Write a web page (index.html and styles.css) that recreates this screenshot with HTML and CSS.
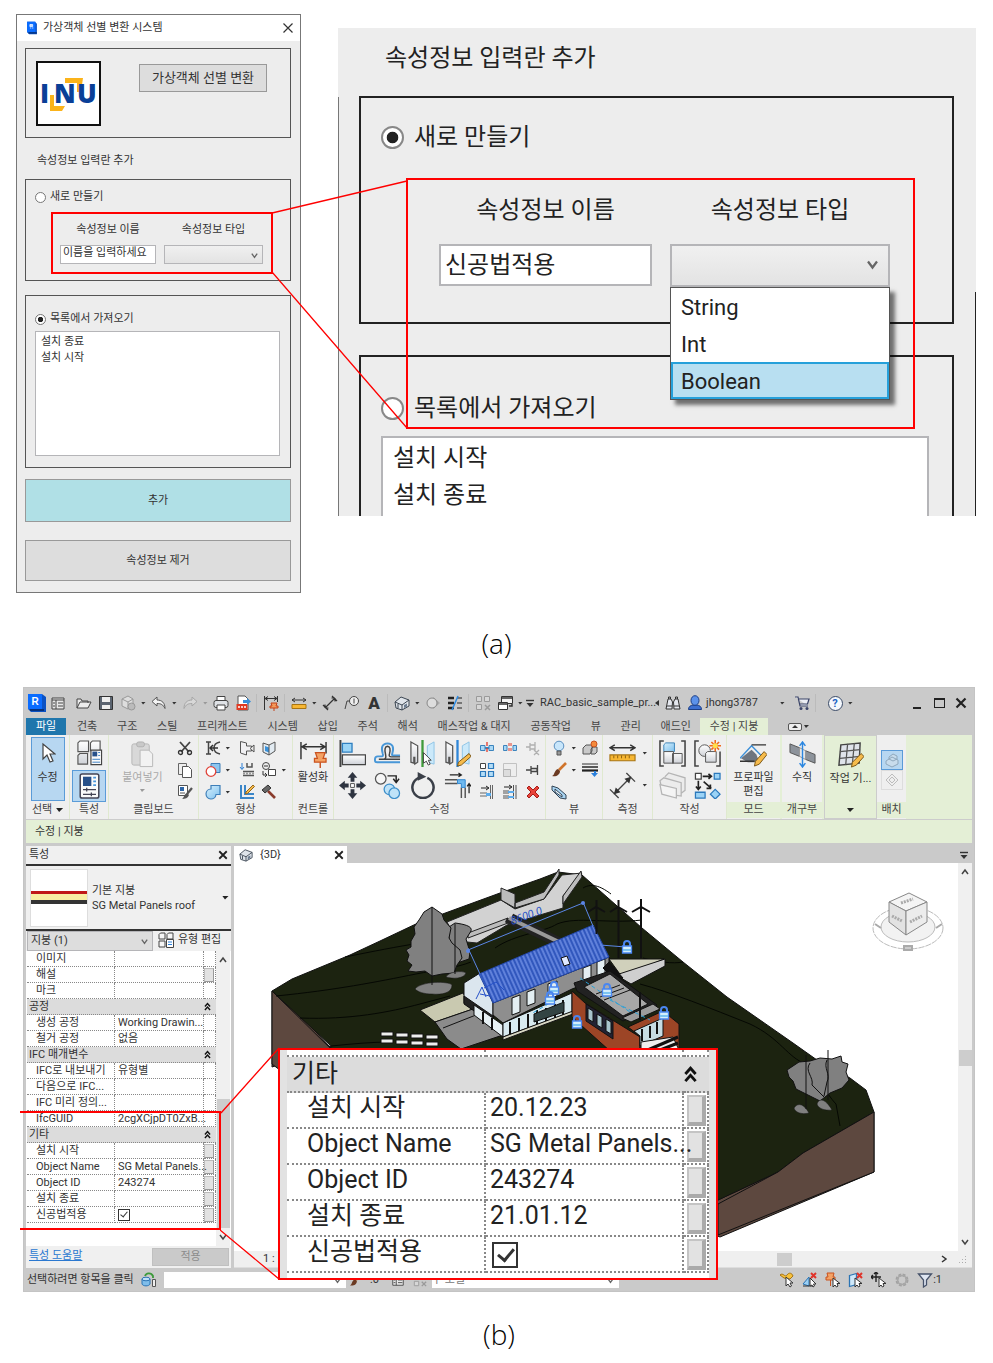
FILE: index.html
```html
<!DOCTYPE html>
<html lang="ko">
<head>
  <meta charset="UTF-8">
  <meta name="viewport" content="width=device-width, initial-scale=1.0">
  <title>가상객체 선별 변환 시스템</title>
  <link rel="stylesheet" href="styles.css">
</head>
<body>
  <!-- ICONS -->
  <svg class="sprite" aria-hidden="true">
    <defs>
      <linearGradient id="gBlue" x1="0" y1="0" x2="1" y2="1"><stop offset="0" stop-color="#d8f0fc"/><stop offset="1" stop-color="#7cc0ee"/></linearGradient>
      <linearGradient id="gGray" x1="0" y1="0" x2="0" y2="1"><stop offset="0" stop-color="#ffffff"/><stop offset="1" stop-color="#cfd2d8"/></linearGradient>
      <pattern id="seam" width="4" height="4" patternUnits="userSpaceOnUse" patternTransform="rotate(-24)"><rect width="4" height="4" fill="#3157bd"/><path d="M1 0v4" stroke="#7f9df0" stroke-width="1.2"/></pattern>
    </defs>
    <symbol id="close" viewBox="0 0 12 12"><path d="M1.500 1.500l9 9M10.500 1.500l-9 9" fill="none" stroke="currentColor" stroke-width="1.200"/></symbol>
    <symbol id="closeBold" viewBox="0 0 12 12"><path d="M1.500 1.500l9 9M10.500 1.500l-9 9" fill="none" stroke="#222" stroke-width="2.200"/></symbol>
    <symbol id="chev" viewBox="0 0 10 10"><path d="M2 3l3 4 3-4" fill="none" stroke="currentColor" stroke-width="1.500"/></symbol>
    <symbol id="dbl" viewBox="0 0 10 14"><path d="M1 7l4-4.500L9 7M1 12.500L5 8l4 4.500" fill="none" stroke="#111" stroke-width="2.200"/></symbol>
    <symbol id="home" viewBox="0 0 16 16"><path d="M2 3h12v11H2z" fill="#e8e8e8" stroke="#444"/><path d="M2 5h12M6 5v9M8 8h5M8 11h5M3 8h2M3 11h2" stroke="#444" fill="none"/></symbol>
    <symbol id="open" viewBox="0 0 16 16"><path d="M1 13V4h4l1 2h6v2M1 13l3-6h11l-3 6z" fill="#ececec" stroke="#444"/></symbol>
    <symbol id="save" viewBox="0 0 16 16"><path d="M1.500 1.500h13v13h-13z" fill="#5b6470" stroke="#333"/><path d="M4 2h8v5H4zM4 10h8v4H4z" fill="#eee"/></symbol>
    <symbol id="cubeGray" viewBox="0 0 16 16"><path d="M2 4l6-3 5 3v7l-5 3-6-3z" fill="#ddd" stroke="#999"/><path d="M2 4l6 3 5-3M8 7v7" stroke="#999" fill="none"/><circle cx="11.500" cy="11.500" r="3.500" fill="#bbb" stroke="#999"/></symbol>
    <symbol id="undo" viewBox="0 0 16 16"><path d="M6 2L1 6.500 6 11V8.500c4 0 6 1 8 5C14 8 11 5 6 5z" fill="#f4f4f4" stroke="#555"/></symbol>
    <symbol id="redo" viewBox="0 0 16 16"><path d="M10 2l5 4.500L10 11V8.500c-4 0-6 1-8 5C2 8 5 5 10 5z" fill="#d8d8d8" stroke="#a6a6a6"/></symbol>
    <symbol id="print" viewBox="0 0 16 16"><path d="M4 1.500h8V6H4z" fill="#fff" stroke="#444"/><rect x="1" y="5.500" width="14" height="7" rx="2" fill="#dfe2e6" stroke="#444"/><path d="M4 10h8v5H4z" fill="#fff" stroke="#444"/></symbol>
    <symbol id="pdf" viewBox="0 0 16 16"><path d="M3 1h7l3 3v11H3z" fill="#fff" stroke="#555"/><path d="M1.500 9h11v6h-11z" fill="#e03a22"/><path d="M3 12h8" stroke="#fff" stroke-width="1.500" stroke-dasharray="2 1"/><path d="M8 5h4V3l4 3.500-4 3.500V8H8z" fill="#3a8fd8"/></symbol>
    <symbol id="dimpin" viewBox="0 0 16 16"><path d="M1.500 1v14M14.500 1v6M2 3.500h12M5 1.500l-3 2 3 2M11 1.500l3 2-3 2" fill="none" stroke="#333"/><path d="M8 8h6l-1 3h2v2H7v-2h2zM11 13v3" fill="#f29a5c" stroke="#c4421a"/></symbol>
    <symbol id="measure" viewBox="0 0 16 16"><path d="M1 5h14M4 3L1 5l3 2M12 3l3 2-3 2" fill="none" stroke="#333"/><path d="M1 9.500h14v4H1z" fill="#f7b733" stroke="#a87412"/></symbol>
    <symbol id="dim" viewBox="0 0 16 16"><path d="M3 13L13 3M1 10l5 5M10 1l5 5M3 13v-3.500M3 13h3.500M13 3v3.500M13 3H9.500" fill="none" stroke="#333" stroke-width="1.200"/></symbol>
    <symbol id="tag" viewBox="0 0 16 16"><circle cx="10" cy="6" r="4.500" fill="#eee" stroke="#444"/><path d="M10 3.500v5M5.500 6H3l-2 8" fill="none" stroke="#444"/></symbol>
    <symbol id="house" viewBox="0 0 16 16"><path d="M1 7l6-5 8 3v6l-7 4-6-2z" fill="#dfe4ea" stroke="#3c4652"/><path d="M1 7l7 3 7-5M8 10v5M4 9v4" fill="none" stroke="#3c4652"/><path d="M10 10l3-1.500v3L10 13z" fill="#6c7c90"/></symbol>
    <symbol id="section" viewBox="0 0 16 16"><path d="M8 2l7 6-7 6z" fill="#aaa"/><circle cx="7" cy="8" r="5" fill="#ddd" stroke="#888"/></symbol>
    <symbol id="thin" viewBox="0 0 16 16"><path d="M1 3h6M1 8h6M1 13h6" stroke="#222" stroke-width="2.400"/><path d="M10 3h5M10 8h5M10 13h5" stroke="#222"/><path d="M11 1L5 15" stroke="#2b8ce6" stroke-width="1.500"/></symbol>
    <symbol id="closeViews" viewBox="0 0 16 16"><path d="M1.500 1.500h5v5h-5zM1.500 9.500h5v5h-5zM9.500 1.500h5v5h-5z" fill="#d6d6d6" stroke="#9a9a9a"/><path d="M10 10l5 5M15 10l-5 5" stroke="#9a9a9a" stroke-width="1.500"/></symbol>
    <symbol id="switch" viewBox="0 0 16 16"><path d="M4.500 1.500h11v7h-11z" fill="#f2f2f2" stroke="#333"/><path d="M1.500 7.500h9v7h-9z" fill="#fff" stroke="#333"/><path d="M5 3h10M2 9h8M12 11h3V9" stroke="#333" fill="none" stroke-width="1.500"/></symbol>
    <symbol id="more" viewBox="0 0 10 10"><path d="M1 2.500h8" stroke="#333" stroke-width="1.400"/><path d="M1.500 5h7L5 9z" fill="#333"/></symbol>
    <symbol id="binoc" viewBox="0 0 16 16"><path d="M1 14L3 4h3l1.500 3L7 14zM15 14L13 4h-3L8.500 7 9 14z" fill="#e4e7ee" stroke="#333"/><path d="M3.500 4V2h2v2M10.500 4V2h2v2M2 11h5M9 11h5" fill="none" stroke="#333"/></symbol>
    <symbol id="user" viewBox="0 0 16 16"><path d="M1.500 14.500c0-3 2-4 4.500-4.500h4c2.500.500 4.500 1.500 4.500 4.500z" fill="#3c6fd0" stroke="#1d3f86"/><ellipse cx="8" cy="5.500" rx="4" ry="4.800" fill="#5c92ea" stroke="#1d3f86"/></symbol>
    <symbol id="cart" viewBox="0 0 16 16"><path d="M1 2h3l2 9h8M4.500 4H15l-1.500 5H6" fill="#eceef4" stroke="#3b4468" stroke-width="1.200"/><circle cx="7" cy="13.500" r="1.500" fill="#3b4468"/><circle cx="13" cy="13.500" r="1.500" fill="#3b4468"/></symbol>
    <symbol id="arrow" viewBox="0 0 16 24"><path d="M3 2v15l4-4 3 7 3-1-3-7h5z" fill="#fff" stroke="#444" stroke-width="1.200"/></symbol>
    <symbol id="famProps" viewBox="0 0 28 28"><path d="M2 3l2-2h9v11H2zM15 3l2-2h8v10H15zM2 16l2-2h8v11H2z" fill="url(#gGray)" stroke="#555" stroke-width="1.200"/><path d="M15.500 10.500h11v15h-11z" fill="#fafafa" stroke="#444" stroke-width="1.200"/><path d="M17 12h5v5h-5z" fill="#27508a"/><path d="M23 13h2M23 16h2M17 20h8M17 23h8" stroke="#3b7fc4"/></symbol>
    <symbol id="props" viewBox="0 0 24 28"><rect x="2" y="1" width="20" height="26" rx="2" fill="#fafafa" stroke="#445" stroke-width="1.600"/><path d="M5 4h9v10H5z" fill="#27508a"/><path d="M16 5h3M16 9h3M16 13h3" stroke="#4a96dc" stroke-width="2"/><path d="M5 18h14M5 23h14M9 16v4M14 21v4" stroke="#445" stroke-width="1.400"/></symbol>
    <symbol id="paste" viewBox="0 0 28 28"><rect x="3" y="3" width="18" height="22" rx="2" fill="#d8d8d8" stroke="#b5b5b5"/><rect x="8" y="1" width="8" height="5" rx="2" fill="#c9c9c9" stroke="#b0b0b0"/><path d="M11.500 9.500h9l4 4v13h-13z" fill="#f2f2f2" stroke="#b8b8b8"/></symbol>
    <symbol id="cut" viewBox="0 0 16 16"><path d="M3 2l9 10M13 2L4 12" stroke="#444" stroke-width="1.800"/><circle cx="3.500" cy="12.500" r="2" fill="none" stroke="#333" stroke-width="1.300"/><circle cx="12.500" cy="12.500" r="2" fill="none" stroke="#333" stroke-width="1.300"/></symbol>
    <symbol id="copy" viewBox="0 0 16 16"><path d="M1.500 1.500h8v11h-8z" fill="#eee" stroke="#666"/><path d="M5.500 4.500h6l3 3v8h-9z" fill="#fff" stroke="#555"/></symbol>
    <symbol id="match" viewBox="0 0 16 16"><path d="M1.500 1.500h9v10h-9z" fill="#fff" stroke="#555"/><path d="M3 3h4v4H3z" fill="#2e66a8"/><path d="M3 9h5" stroke="#555"/><path d="M15 4l-5 6" stroke="#555" stroke-width="2.200"/><path d="M10 9l2 2c-1 3-4 4-7 4 2-1 2-5 5-6z" fill="#555"/></symbol>
    <symbol id="cope" viewBox="0 0 16 16"><path d="M1 2h5M1 14h5M3.500 2v12M15 2c-5 1-6 4-6 6s1 5 6 6" fill="none" stroke="#444" stroke-width="1.500"/><path d="M5 8h8M8 5L5 8l3 3" fill="none" stroke="#333" stroke-width="1.500"/></symbol>
    <symbol id="cutGeo" viewBox="0 0 16 16"><path d="M6 1.500h9v9H6z" fill="#8cc6f0" stroke="#3d7eb8"/><circle cx="6" cy="9.500" r="4.800" fill="#fff" stroke="#e0443a" stroke-width="1.300"/></symbol>
    <symbol id="joinGeo" viewBox="0 0 16 16"><path d="M6 1.500h9v9h-4A5 5 0 1 1 6 5z" fill="url(#gBlue)" stroke="#3d7eb8" stroke-width="1.200"/></symbol>
    <symbol id="door" viewBox="0 0 16 16"><path d="M1.500 1.500l6 1.500v3h5v5h-5v4l-6-2z" fill="#f0f0f2" stroke="#555"/><path d="M15 5l-4 3.500L15 12z" fill="#e8e8e8" stroke="#555"/></symbol>
    <symbol id="splitface" viewBox="0 0 16 16"><path d="M2 3l6 2 6-3v9l-6 4-6-3z" fill="#e2ebf2" stroke="#555"/><path d="M4 6l4 1.500v5L4 11z" fill="#3b93dc"/><path d="M8 5v10" stroke="#555"/></symbol>
    <symbol id="beam" viewBox="0 0 16 16"><path d="M3 1v6M1 5l2 2.500L5 5" fill="none" stroke="#2b7fd6"/><path d="M8 1v4h5V1M4 9.500h11M4 13.500h11" fill="none" stroke="#555" stroke-width="1.500"/><path d="M4 11.500h11" stroke="#999" stroke-width="2" stroke-dasharray="2 1"/></symbol>
    <symbol id="demo" viewBox="0 0 16 16"><circle cx="5" cy="4" r="3.500" fill="#eee" stroke="#444"/><path d="M7.500 7.500h7v6h-7z" fill="#fff" stroke="#444"/><path d="M2 9v4h3M4 11l2 2-2 2M3 4h4" fill="none" stroke="#333"/></symbol>
    <symbol id="wallj" viewBox="0 0 16 16"><path d="M2 1v13h13M6 1v9h9" fill="none" stroke="#3a86c8" stroke-width="2"/><path d="M14 1l1.500 1.500-7 7-2 .500.500-2z" fill="#f6bb4c" stroke="#94661a"/></symbol>
    <symbol id="hammer" viewBox="0 0 16 16"><path d="M7 7l7 7" stroke="#8a3b2c" stroke-width="2.600"/><path d="M1 6l6-5 3 3-6 5z" fill="#666" stroke="#333"/></symbol>
    <symbol id="activate" viewBox="0 0 28 28"><path d="M1 1v18M27 1v12M2 6h24M7 3L2 6l5 3M21 3l5 3-5 3" fill="none" stroke="#333" stroke-width="1.500"/><path d="M16 12h10l-2 6h3v4H15v-4h3z" fill="#f4a264" stroke="#c9521f" stroke-width="1.300"/><path d="M21 22v6" stroke="#c9521f" stroke-width="1.500"/></symbol>
    <symbol id="align" viewBox="0 0 28 28"><path d="M1.500 0v28" stroke="#444" stroke-width="2"/><path d="M3.500 3.500h10v9h-10z" fill="#9ad4f6" stroke="#2f7fc0" stroke-width="1.400"/><path d="M3.500 15.500h24v10h-24z" fill="url(#gGray)" stroke="#444" stroke-width="1.400"/></symbol>
    <symbol id="offset" viewBox="0 0 28 28"><path d="M27 23H3q-2 0-2-2v-1q0-3 3-3h4q2 0 1-3-3-10 5-10.500 8 .500 5 10.500-1 2 1 2h7" fill="none" stroke="#4897d8" stroke-width="2"/><path d="M27 20H5h5q3 0 2-5-2-8 2-8.500 4 .500 2 8-1 3 2 3h9" fill="none" stroke="#444" stroke-width="1.500"/></symbol>
    <symbol id="mirrorPick" viewBox="0 0 28 28"><path d="M2 2l7 4v17l-3 2v-7H5v6l-3-1z" fill="url(#gGray)" stroke="#555" stroke-width="1.300"/><path d="M26 2l-7 4v17l7 2z" fill="#cbe9fa" stroke="#8ec4e6"/><path d="M14 0v28" stroke="#3f9a3a" stroke-width="2.400"/><path d="M15 13v11l3-2 2 4 2-1-2-4h3z" fill="#fff" stroke="#444"/></symbol>
    <symbol id="mirrorDraw" viewBox="0 0 28 28"><path d="M2 2l7 4v17l-3 2v-7H5v6l-3-1z" fill="url(#gGray)" stroke="#555" stroke-width="1.300"/><path d="M26 2l-7 4v17l7 2z" fill="#cbe9fa" stroke="#8ec4e6"/><path d="M14 0v28" stroke="#2f86d8" stroke-width="2.400"/><path d="M26 14l2 3-10 9-4 1 1-4z" fill="#f6bb4c" stroke="#7a5516"/></symbol>
    <symbol id="move" viewBox="0 0 28 28"><path d="M14 0l5 6h-3v4h-4V6H9zM14 28l5-6h-3v-4h-4v4H9zM0 14l6-5v3h4v4H6v3zM28 14l-6-5v3h-4v4h4v3z" fill="#2e3440"/><path d="M12 12h4v4h-4z" fill="#fff" stroke="#555"/></symbol>
    <symbol id="copyBig" viewBox="0 0 28 28"><circle cx="7" cy="7" r="5.500" fill="#f6f6f6" stroke="#555" stroke-width="1.300"/><path d="M14 4h9v6M20 7l3 4 3-4" fill="none" stroke="#222" stroke-width="1.500"/><circle cx="16" cy="18" r="5.500" fill="#bfe3f8" stroke="#3d8fca" stroke-width="1.300"/><circle cx="21" cy="22" r="5.500" fill="#bfe3f8" stroke="#3d8fca" stroke-width="1.300"/></symbol>
    <symbol id="rotate" viewBox="0 0 28 28"><path d="M19 6a11 11 0 1 1-9 0" fill="none" stroke="#3a3f48" stroke-width="2.600"/><path d="M9 0l9 5-9 4z" fill="#3a3f48"/></symbol>
    <symbol id="trim" viewBox="0 0 28 28"><path d="M1 8h13M1 12h13M18 16v11M22 16v11" stroke="#555" stroke-width="1.500"/><path d="M14 8h8v8h-4v-4h-4z" fill="#6fb9ee" stroke="#2f86d0"/><path d="M6 3h12M15 1l3 2-3 2M26 22V12M24 15l2-3 2 3" fill="none" stroke="#222" stroke-width="1.300"/></symbol>
    <symbol id="split" viewBox="0 0 16 16"><path d="M1.500 5.500H6v5H1.500zM10 5.500h4.500v5H10z" fill="#a9d8f6" stroke="#3c84bd"/><path d="M6 8h4" stroke="#3c84bd" stroke-width="2"/><path d="M8 2v12" stroke="#e03a2c" stroke-width="1.300" stroke-dasharray="4 2"/></symbol>
    <symbol id="splitGap" viewBox="0 0 16 16"><path d="M1.500 5.500H5v5H1.500zM11 5.500h3.500v5H11z" fill="#a9d8f6" stroke="#3c84bd"/><path d="M7 3v10M9 3v10" stroke="#e03a2c" stroke-dasharray="3 2"/></symbol>
    <symbol id="unpin" viewBox="0 0 16 16"><path d="M1 7h4M5 3v8M5 5h5M5 9h5M10 2v9M9 10l5 5M14 10l-5 5" fill="none" stroke="#b0b0b0" stroke-width="1.300"/></symbol>
    <symbol id="array" viewBox="0 0 16 16"><path d="M1.500 1.500h5v5h-5z" fill="#fff" stroke="#444"/><path d="M9.500 1.500h5v5h-5zM1.500 9.500h5v5h-5zM9.500 9.500h5v5h-5z" fill="#b4ddf6" stroke="#2b79bc" stroke-width="1.200"/></symbol>
    <symbol id="scale" viewBox="0 0 16 16"><path d="M1.500 1.500h13v13h-13z" fill="#eee" stroke="#c2c2c2"/><path d="M1.500 7.500h7v7h-7z" fill="#ddd" stroke="#b5b5b5"/></symbol>
    <symbol id="pin" viewBox="0 0 16 16"><path d="M1 8h5M6 4v8M12.500 3v10M6 6.500h6v3H6z" fill="#eee" stroke="#444" stroke-width="1.300"/></symbol>
    <symbol id="trimOne" viewBox="0 0 16 16"><path d="M2 4h7M7 2l3 2-3 2" fill="none" stroke="#222"/><path d="M1 9h7M1 12h7M13.500 1v14M11.500 1v14" stroke="#666"/><path d="M7 9h5v3H7z" fill="#5cacec"/></symbol>
    <symbol id="trimMany" viewBox="0 0 16 16"><path d="M2 3h7M7 1l3 2-3 2" fill="none" stroke="#222"/><path d="M1 7h6M1 9h6M1 12h6M1 14h6M14 1v14M11.500 1v14" stroke="#555"/><path d="M6 7h6v2H6zM6 12h6v2H6z" fill="#5cacec"/></symbol>
    <symbol id="del" viewBox="0 0 16 16"><path d="M4 2l4 4 4-4 2 2-4 4 4 4-2 2-4-4-4 4-2-2 4-4-4-4z" fill="#e8443a" stroke="#a81c18"/></symbol>
    <symbol id="bulb" viewBox="0 0 16 16"><circle cx="8" cy="6" r="4.800" fill="#c8e6fb" stroke="#5a8fc0"/><path d="M6 11h4v4H6z" fill="#999" stroke="#555"/></symbol>
    <symbol id="boxHide" viewBox="0 0 16 16"><path d="M1 8l3-3h6v6l-2 3H1zM9 9l2-2h4v5l-2 2H9z" fill="#c9c9c9" stroke="#555"/><circle cx="12" cy="4" r="3" fill="#f58a3c" stroke="#c9521f"/></symbol>
    <symbol id="brush" viewBox="0 0 16 16"><path d="M15 1L8 8" stroke="#d0742c" stroke-width="2.600"/><path d="M7 7l2 2c0 4-4 6-8 5 3-1 2-6 6-7z" fill="#6b3a22"/></symbol>
    <symbol id="lines" viewBox="0 0 16 16"><path d="M0 2h16" stroke="#333"/><path d="M0 5h16" stroke="#333" stroke-width="1.600"/><path d="M0 8.500h16" stroke="#222" stroke-width="2.200"/><path d="M9 11h3v-2h2v2h2l-3.500 4z" fill="#2b80dc"/></symbol>
    <symbol id="secBox" viewBox="0 0 16 16"><path d="M1 2l6 2 8 7v4l-6-1-8-8z" fill="#a9d4f2" stroke="#345"/><path d="M4 5l7 6v2L4 8z" fill="#eaf5fc" stroke="#345"/></symbol>
    <symbol id="ruler" viewBox="0 0 28 28"><path d="M1 8h26M6 5L1 8l5 3M22 5l5 3-5 3" fill="none" stroke="#333" stroke-width="1.500"/><path d="M1 15.500h26v6H1z" fill="#f7b733" stroke="#a87412" stroke-width="1.200"/><path d="M5 16v3M9 16v3M13 16v3M17 16v3M21 16v3" stroke="#8a5f0e"/></symbol>
    <symbol id="dimBig" viewBox="0 0 28 28"><path d="M5 23L23 5M1 18l9 9M18 1l9 9" fill="none" stroke="#444" stroke-width="1.400"/><path d="M5 23l2-7 5 5zM23 5l-7 2 5 5z" fill="#333"/></symbol>
    <symbol id="grp" viewBox="0 0 28 28"><path d="M5 1H1v26h4M23 1h4v26h-4" fill="none" stroke="#444" stroke-width="1.600"/><path d="M5 5l2-2h9v9H5z" fill="url(#gBlue)" stroke="#3a83b8"/><path d="M5 12h10v12H5zM14 14h10v10H14z" fill="url(#gGray)" stroke="#555"/></symbol>
    <symbol id="asm" viewBox="0 0 28 28"><path d="M5 1H1v26h4M23 27h4V12" fill="none" stroke="#444" stroke-width="1.600"/><circle cx="11" cy="11" r="6" fill="url(#gGray)" stroke="#555"/><path d="M12 14l2-2h9v11H12z" fill="url(#gGray)" stroke="#555"/><path d="M22 0v12M16 6h12M18 2l8 8M26 2l-8 8" stroke="#f06a1c" stroke-width="1.600"/><circle cx="22" cy="6" r="2.600" fill="#ffe04a"/></symbol>
    <symbol id="parts" viewBox="0 0 28 28"><path d="M6 5l4-4 17 5v13l-4 3M1 9l4-3 18 5v14L4 22z" fill="#ececec" stroke="#b5b5b5" stroke-width="1.300"/><path d="M1 13l17 4v10L3 23z" fill="#f4f4f4" stroke="#b5b5b5" stroke-width="1.300"/></symbol>
    <symbol id="similar" viewBox="0 0 28 28"><path d="M1.500 1.500h6v6h-6z" fill="#fff" stroke="#444" stroke-width="1.300"/><path d="M21 1.500h6v6h-6zM1.500 21h10v6h-10zM22 18l5 5-5 5-5-5z" fill="#9bd3f6" stroke="#2b79bc" stroke-width="1.300"/><path d="M9 4.500h9M4.500 9v9M10 10l8 7M2 15l2.500 3L7 15M15 2l3 2.500L15 7M17 13v4h-4" fill="none" stroke="#222" stroke-width="1.700"/></symbol>
    <symbol id="profile" viewBox="0 0 28 28"><path d="M1 18l11-9 5 5 3 8H8z" fill="#6d7580"/><path d="M0 18L12 5l12 12" fill="none" stroke="#3d90d8" stroke-width="1.500"/><path d="M12 4h15M0 21h15" stroke="#333" stroke-width="1.500"/><path d="M25 11l3 3-8 10-5 2 1-5z" fill="#f6bb4c" stroke="#7a5516"/></symbol>
    <symbol id="vopen" viewBox="0 0 28 28"><path d="M1 3l10 4v9L1 12zM17 10l10 4v9l-10-4z" fill="#8d939b" stroke="#555"/><path d="M11 7l6 3v9l-6-3z" fill="#eee" stroke="#999"/><path d="M14 1v26M11 5l3-4 3 4M11 23l3 4 3-4" fill="none" stroke="#2b86e0" stroke-width="1.500"/></symbol>
    <symbol id="workplane" viewBox="0 0 28 28"><path d="M4 3l20-2-1 21-21 2z" fill="#dfe3ea" stroke="#444" stroke-width="1.500"/><path d="M11 2l-2 22M18 1l-2 21M3 10l21-2M3 17l21-2" stroke="#555" fill="none" stroke-width="1.300"/><path d="M25 12l3 3-8 9-5 2 1-5z" fill="#f6bb4c" stroke="#7a5516"/></symbol>
    <symbol id="placeFace" viewBox="0 0 16 16"><path d="M2 9l6-4 6 3v4l-6 3-6-3zM5 5l4-3 4 2v3l-4 2-4-2z" fill="#c8dcec" stroke="#8fa8bc"/></symbol>
    <symbol id="placeWp" viewBox="0 0 16 16"><path d="M8 2l6 6-6 6-6-6zM8 5l3 3-3 3-3-3z" fill="#eee" stroke="#bdbdbd"/></symbol>
    <symbol id="editType" viewBox="0 0 16 16"><path d="M1 2.500L2.500 1H7v6H1zM9 2.500L10.500 1H15v6H9zM1 9h6v6H1z" fill="#f6f6f6" stroke="#444"/><path d="M8.500 7.500h7v8h-7z" fill="#fff" stroke="#444"/><path d="M10 10h4M10 12.500h4" stroke="#2b80dc"/></symbol>
    <symbol id="worksets" viewBox="0 0 16 16"><path d="M1 7v5c1 2.500 7 2.500 8 0V7" fill="#7fbdea" stroke="#2b74b4"/><ellipse cx="5" cy="7" rx="4" ry="1.800" fill="#bfe0f8" stroke="#2b74b4"/><path d="M11.500 7.500h3v7h-3z" fill="#eee" stroke="#555"/><path d="M4 4c1-3 6-4 8 0v2" fill="none" stroke="#3b9a3a" stroke-width="1.800"/></symbol>
    <symbol id="selLink" viewBox="0 0 16 16"><path d="M1 3c3-3 5 3 7 0s5-2 6 1l-3 3-6-1z" fill="#f7c23c" stroke="#a87412"/><path d="M7 5v9l2-2 2 3 1.500-1-1.500-3h3z" fill="#fff" stroke="#333"/></symbol>
    <symbol id="selUnder" viewBox="0 0 16 16"><path d="M1 12l6-7v9z" fill="#9bd0f4" stroke="#2b74b4"/><path d="M1 14h10" stroke="#333"/><path d="M9 1l5 5M14 1L9 6" stroke="#e0332a" stroke-width="2"/><path d="M8 6v8l2-1 1 2 1.500-1-1-2h2.500z" fill="#fff" stroke="#333"/></symbol>
    <symbol id="selPin" viewBox="0 0 16 16"><path d="M2 1h7l-1 4h2v3H1V5h2zM5.500 8v6" fill="#f4a264" stroke="#c9521f"/><path d="M8 6v9l2-2 1.500 2 1.500-1-1-2.500h3z" fill="#fff" stroke="#333"/></symbol>
    <symbol id="selFace" viewBox="0 0 16 16"><path d="M1.500 3.500l7-2v11l-7 2z" fill="#cfe8f9" stroke="#2b74b4" stroke-width="1.300"/><path d="M9 1l5 5M14 1L9 6" stroke="#e0332a" stroke-width="2"/><path d="M7 6v9l2-2 1.500 2 1.500-1-1-2.500h3z" fill="#fff" stroke="#333"/></symbol>
    <symbol id="selDrag" viewBox="0 0 16 16"><path d="M5 0v10M0 5h10M3 2l2-2 2 2M2 3L0 5l2 2" fill="none" stroke="#222" stroke-width="1.400"/><path d="M8 6v9l2-2 1.500 2 1.500-1-1-2.500h3z" fill="#fff" stroke="#333"/></symbol>
    <symbol id="gear" viewBox="0 0 16 16"><circle cx="8" cy="8" r="5" fill="none" stroke="#a2a2a2" stroke-width="3" stroke-dasharray="2.600 1.330"/><circle cx="8" cy="8" r="4.500" fill="none" stroke="#a8a8a8" stroke-width="1.500"/></symbol>
    <symbol id="filter" viewBox="0 0 16 16"><path d="M1.500 2h13L9.500 8v5l-3 2V8z" fill="#dfe6f2" stroke="#46526a" stroke-width="1.300"/></symbol>
    <symbol id="lock" viewBox="0 0 12 14"><path d="M3 6V4a3 3 0 0 1 6 0v2" fill="none" stroke="#4a86f0" stroke-width="2"/><path d="M1.500 6h9v7h-9z" fill="#d2eefc" stroke="#4a86f0" stroke-width="1.300"/><path d="M2 10h8" stroke="#7cc4f2" stroke-width="2"/></symbol>
  </svg>

  <!-- (a) -->
  <figure class="fig fig-a">
    <div class="fig-row">
      <section class="dialog">
        <header class="dialog-title">
          <svg class="ic14" viewBox="0 0 20 20"><path d="M3 1h11l3 3v15H6l-3-3z" fill="#0b52c4"/><path d="M3 1h12v15H3z" fill="#0a6cff"/><path d="M5 17h12" stroke="#06317c" stroke-width="2"/><path d="M7 5h4v3H7zM7 10h2M10 10h2" fill="#bcd8ff" stroke="#fff"/></svg>
          <span>가상객체 선별 변환 시스템</span>
          <button class="plain" aria-label="닫기"><svg class="ic12"><use href="#close"/></svg></button>
        </header>
        <div class="dialog-body">
          <div class="box box-head">
            <svg class="inu" viewBox="0 0 61 61" role="img" aria-label="INU">
              <path d="M27 15h18l-2 14h-4v-9H27z" fill="#fbb31a"/>
              <path d="M12 32h4v11h11l-3 5H12z" fill="#fbb31a"/>
              <g fill="#0a3f97" font-family="Open Sans" font-weight="800" font-size="26">
                <text x="2" y="40">I</text><text x="16" y="40">N</text><text x="39" y="40">U</text>
              </g>
            </svg>
            <button class="btn btn-convert">가상객체 선별 변환</button>
          </div>
          <p class="section-label">속성정보 입력란 추가</p>
          <div class="box box-new">
            <label class="radio"><input type="radio" name="mode"> 새로 만들기</label>
            <div class="callout fields">
              <label for="attrName">속성정보 이름</label>
              <label for="attrType">속성정보 타입</label>
              <input id="attrName" type="text" value="이름을 입력하세요">
              <span class="combo"><select id="attrType"><option></option></select><svg><use href="#chev"/></svg></span>
            </div>
          </div>
          <div class="box box-list">
            <label class="radio"><input type="radio" name="mode" checked> 목록에서 가져오기</label>
            <ul class="list">
              <li>설치 종료</li>
              <li>설치 시작</li>
            </ul>
          </div>
          <button class="btn btn-add">추가</button>
          <button class="btn btn-remove">속성정보 제거</button>
        </div>
      </section>

      <section class="closeup">
        <p class="section-label">속성정보 입력란 추가</p>
        <div class="box box-new">
          <label class="radio"><input type="radio" name="mode2" checked> 새로 만들기</label>
          <div class="fields">
            <label for="attrName2">속성정보 이름</label>
            <label for="attrType2">속성정보 타입</label>
            <input id="attrName2" type="text" value="신공법적용">
            <div class="combo">
              <select id="attrType2"><option></option></select><svg><use href="#chev"/></svg>
              <ul class="menu">
                <li>String</li>
                <li>Int</li>
                <li class="active">Boolean</li>
              </ul>
            </div>
          </div>
        </div>
        <div class="box box-list">
          <label class="radio"><input type="radio" name="mode2"> 목록에서 가져오기</label>
          <ul class="list">
            <li>설치 시작</li>
            <li>설치 종료</li>
          </ul>
        </div>
        <div class="callout frame"></div>
      </section>
    </div>
    <svg class="leader leader-a" viewBox="0 0 136 250"><path d="M0 33L135 1M0 92L135 248" /></svg>
    <figcaption>(a)</figcaption>
  </figure>

  <!-- (b) -->
  <figure class="fig fig-b">
    <div class="app">
      <div class="titlebar">
        <svg class="logo" viewBox="0 0 20 20"><path d="M1 1h14l4 3v15H4l-3-3z" fill="#0b52c4"/><path d="M1 1h14v15H1z" fill="#0a6cff"/><path d="M3 17h14" stroke="#06317c" stroke-width="2"/><text x="8" y="12" text-anchor="middle" font-family="Liberation Sans" font-weight="bold" font-size="10" fill="#fff">R</text></svg>
        <button class="q" aria-label="홈"><svg><use href="#home"/></svg></button>
        <button class="q q-open" aria-label="열기"><svg><use href="#open"/></svg></button>
        <button class="q" aria-label="저장"><svg><use href="#save"/></svg></button>
        <button class="q" aria-label="동기화"><svg><use href="#cubeGray"/></svg></button><i class="caret"></i>
        <button class="q" aria-label="명령 취소"><svg><use href="#undo"/></svg></button><i class="caret"></i>
        <button class="q" aria-label="명령 복구"><svg><use href="#redo"/></svg></button><i class="caret dim"></i>
        <button class="q" aria-label="인쇄"><svg><use href="#print"/></svg></button>
        <button class="q" aria-label="PDF"><svg><use href="#pdf"/></svg></button><i class="sep"></i>
        <button class="q" aria-label="활성화"><svg><use href="#dimpin"/></svg></button><i class="sep"></i>
        <button class="q" aria-label="측정"><svg><use href="#measure"/></svg></button><i class="caret"></i>
        <button class="q" aria-label="치수"><svg><use href="#dim"/></svg></button>
        <button class="q" aria-label="태그"><svg><use href="#tag"/></svg></button>
        <button class="q q-text">A</button><i class="sep"></i>
        <button class="q" aria-label="3D 뷰"><svg><use href="#house"/></svg></button><i class="caret"></i>
        <button class="q" aria-label="단면도"><svg><use href="#section"/></svg></button>
        <button class="q" aria-label="가는 선"><svg><use href="#thin"/></svg></button><i class="sep"></i>
        <button class="q" aria-label="뷰 닫기"><svg><use href="#closeViews"/></svg></button>
        <button class="q" aria-label="창 전환"><svg><use href="#switch"/></svg></button><i class="caret"></i>
        <svg class="ic10"><use href="#more"/></svg>
        <span class="doc-name">RAC_basic_sample_pr...</span>
        <i class="caret-left"></i>
        <button class="q" aria-label="검색"><svg><use href="#binoc"/></svg></button>
        <button class="q" aria-label="사용자"><svg><use href="#user"/></svg></button>
        <span class="user-name">jhong3787</span><i class="caret"></i>
        <button class="q q-cart" aria-label="스토어"><svg><use href="#cart"/></svg></button><i class="sep"></i>
        <button class="q help" aria-label="도움말"><b>?</b></button><i class="caret"></i>
        <div class="win">
          <button class="q" aria-label="최소화"><i class="w-min"></i></button>
          <button class="q" aria-label="최대화"><i class="w-max"></i></button>
          <button class="q" aria-label="닫기"><svg class="ic12"><use href="#closeBold"/></svg></button>
        </div>
      </div>

      <nav class="tabs">
        <a class="file" href="#">파일</a>
        <div class="tab-list">
          <a href="#">건축</a><a href="#">구조</a><a href="#">스틸</a><a href="#">프리캐스트</a><a href="#">시스템</a><a href="#">삽입</a><a href="#">주석</a><a href="#">해석</a><a href="#">매스작업 &amp; 대지</a><a href="#">공동작업</a><a href="#">뷰</a><a href="#">관리</a><a href="#">애드인</a>
        </div>
        <a class="current" href="#">수정 | 지붕</a>
        <button class="cycle" aria-label="리본 최소화"><i></i></button><i class="caret"></i>
      </nav>

      <div class="ribbon">
        <div class="panel p-select">
          <div class="tools"><button class="big on"><svg class="ptr"><use href="#arrow"/></svg>수정</button></div>
          <span class="name">선택 <i class="tri"></i></span>
        </div>
        <div class="panel p-props">
          <div class="tools grid-props">
            <button class="b" aria-label="유형 특성"><svg><use href="#famProps"/></svg></button>
            <button class="b on" aria-label="특성"><svg><use href="#props"/></svg></button>
          </div>
          <span class="name">특성</span>
        </div>
        <div class="panel p-clip">
          <div class="tools">
            <button class="big off"><svg><use href="#paste"/></svg>붙여넣기<i class="caret dim"></i></button>
            <div class="stack">
              <button class="s" aria-label="잘라내기"><svg><use href="#cut"/></svg></button>
              <button class="s" aria-label="복사"><svg><use href="#copy"/></svg></button>
              <button class="s" aria-label="유형 일치"><svg><use href="#match"/></svg></button>
            </div>
          </div>
          <span class="name">클립보드</span>
        </div>
        <div class="panel p-geo">
          <div class="tools grid-geo">
            <button class="s" aria-label="코프"><svg><use href="#cope"/></svg></button><i class="caret"></i>
            <button class="s" aria-label="결합"><svg><use href="#door"/></svg></button>
            <button class="s" aria-label="면 분할"><svg><use href="#splitface"/></svg></button><i></i>
            <button class="s" aria-label="절단"><svg><use href="#cutGeo"/></svg></button><i class="caret"></i>
            <button class="s" aria-label="보 결합"><svg><use href="#beam"/></svg></button>
            <button class="s" aria-label="분리"><svg><use href="#demo"/></svg></button><i class="caret"></i>
            <button class="s" aria-label="조인"><svg><use href="#joinGeo"/></svg></button><i class="caret"></i>
            <button class="s" aria-label="벽 결합"><svg><use href="#wallj"/></svg></button>
            <button class="s" aria-label="철거"><svg><use href="#hammer"/></svg></button>
          </div>
          <span class="name">형상</span>
        </div>
        <div class="panel p-ctrl">
          <div class="tools"><button class="big"><svg><use href="#activate"/></svg>활성화</button></div>
          <span class="name">컨트롤</span>
        </div>
        <div class="panel p-modify">
          <div class="tools">
            <div class="grid-big">
              <button class="b" aria-label="정렬"><svg><use href="#align"/></svg></button>
              <button class="b" aria-label="간격띄우기"><svg><use href="#offset"/></svg></button>
              <button class="b" aria-label="대칭 축 선택"><svg><use href="#mirrorPick"/></svg></button>
              <button class="b" aria-label="대칭 축 그리기"><svg><use href="#mirrorDraw"/></svg></button>
              <button class="b" aria-label="이동"><svg><use href="#move"/></svg></button>
              <button class="b" aria-label="복사"><svg><use href="#copyBig"/></svg></button>
              <button class="b" aria-label="회전"><svg><use href="#rotate"/></svg></button>
              <button class="b" aria-label="코너로 자르기"><svg><use href="#trim"/></svg></button>
            </div>
            <div class="grid-small">
              <button class="s" aria-label="분할"><svg><use href="#split"/></svg></button>
              <button class="s" aria-label="간격 분할"><svg><use href="#splitGap"/></svg></button>
              <button class="s" aria-label="고정 해제"><svg><use href="#unpin"/></svg></button>
              <button class="s" aria-label="배열"><svg><use href="#array"/></svg></button>
              <button class="s" aria-label="축척"><svg><use href="#scale"/></svg></button>
              <button class="s" aria-label="핀"><svg><use href="#pin"/></svg></button>
              <button class="s" aria-label="단일 연장"><svg><use href="#trimOne"/></svg></button>
              <button class="s" aria-label="다중 연장"><svg><use href="#trimMany"/></svg></button>
              <button class="s" aria-label="삭제"><svg><use href="#del"/></svg></button>
            </div>
          </div>
          <span class="name">수정</span>
        </div>
        <div class="panel p-view">
          <div class="tools grid-view">
            <button class="s" aria-label="숨기기"><svg><use href="#bulb"/></svg></button><i class="caret"></i>
            <button class="s" aria-label="변위"><svg><use href="#boxHide"/></svg></button>
            <button class="s" aria-label="재지정"><svg><use href="#brush"/></svg></button><i class="caret"></i>
            <button class="s" aria-label="선작업"><svg><use href="#lines"/></svg></button>
            <button class="s" aria-label="선택 상자"><svg><use href="#secBox"/></svg></button>
          </div>
          <span class="name">뷰</span>
        </div>
        <div class="panel p-measure">
          <div class="tools grid-measure">
            <button class="b" aria-label="측정"><svg><use href="#ruler"/></svg></button><i class="caret"></i>
            <button class="b" aria-label="치수"><svg><use href="#dimBig"/></svg></button><i class="caret"></i>
          </div>
          <span class="name">측정</span>
        </div>
        <div class="panel p-create">
          <div class="tools grid-create">
            <button class="b" aria-label="그룹"><svg><use href="#grp"/></svg></button>
            <button class="b" aria-label="조합"><svg><use href="#asm"/></svg></button>
            <button class="b" aria-label="부품"><svg><use href="#parts"/></svg></button>
            <button class="b" aria-label="유사 작성"><svg><use href="#similar"/></svg></button>
          </div>
          <span class="name">작성</span>
        </div>
        <div class="panel ctx p-mode">
          <div class="tools"><button class="big"><svg><use href="#profile"/></svg>프로파일<br>편집</button></div>
          <span class="name">모드</span>
        </div>
        <div class="panel ctx p-open">
          <div class="tools"><button class="big"><svg><use href="#vopen"/></svg>수직</button></div>
          <span class="name">개구부</span>
        </div>
        <div class="panel ctx p-plane">
          <div class="tools"><button class="big"><svg><use href="#workplane"/></svg>작업 기...</button></div>
          <span class="name"><i class="tri"></i></span>
        </div>
        <div class="panel ctx p-place">
          <div class="tools place">
            <button class="s on" aria-label="면에 배치"><svg><use href="#placeFace"/></svg></button>
            <button class="s off" aria-label="작업 기준면에 배치"><svg><use href="#placeWp"/></svg></button>
          </div>
          <span class="name">배치</span>
        </div>
      </div>
      <div class="options">수정 | 지붕</div>

      <div class="work">
        <aside class="props">
          <header><span>특성</span><button class="plain" aria-label="닫기"><svg class="ic10"><use href="#closeBold"/></svg></button></header>
          <div class="type">
            <div class="thumb"><i></i></div>
            <p>기본 지붕<br>SG Metal Panels roof</p>
            <i class="tri"></i>
          </div>
          <div class="instance">
            <span class="combo"><select aria-label="지붕"><option>지붕 (1)</option></select><svg><use href="#chev"/></svg></span>
            <button class="plain"><svg class="ic16"><use href="#editType"/></svg>유형 편집</button>
          </div>
          <div class="grid-wrap">
            <table class="params">
              <tr><th>이미지</th><td></td><td></td></tr>
              <tr><th>해설</th><td></td><td class="k"><button aria-label="연관"></button></td></tr>
              <tr><th>마크</th><td></td><td></td></tr>
              <tr class="group"><th colspan="2">공정</th><td><svg><use href="#dbl"/></svg></td></tr>
              <tr><th>생성 공정</th><td>Working Drawin...</td><td></td></tr>
              <tr><th>철거 공정</th><td>없음</td><td></td></tr>
              <tr class="group"><th colspan="2">IFC 매개변수</th><td><svg><use href="#dbl"/></svg></td></tr>
              <tr><th>IFC로 내보내기</th><td>유형별</td><td></td></tr>
              <tr><th>다음으로 IFC...</th><td></td><td></td></tr>
              <tr><th>IFC 미리 정의...</th><td></td><td></td></tr>
              <tr><th>IfcGUID</th><td>2cgXCjpDT0ZxB...</td><td></td></tr>
              <tr class="group"><th colspan="2">기타</th><td><svg><use href="#dbl"/></svg></td></tr>
              <tr><th>설치 시작</th><td></td><td class="k"><button aria-label="연관"></button></td></tr>
              <tr><th>Object Name</th><td>SG Metal Panels...</td><td class="k"><button aria-label="연관"></button></td></tr>
              <tr><th>Object ID</th><td>243274</td><td class="k"><button aria-label="연관"></button></td></tr>
              <tr><th>설치 종료</th><td></td><td class="k"><button aria-label="연관"></button></td></tr>
              <tr><th>신공법적용</th><td><input type="checkbox" aria-label="신공법적용" checked></td><td class="k"><button aria-label="연관"></button></td></tr>
            </table>
            <div class="vbar"><svg class="up"><use href="#chev"/></svg><i class="thumb-v"></i><svg><use href="#chev"/></svg></div>
          </div>
          <footer><a href="#">특성 도움말</a><button disabled>적용</button></footer>
        </aside>

        <main class="view">
          <div class="doc-tabs">
            <div class="doc-tab"><svg class="ic14"><use href="#house"/></svg><span>{3D}</span><button class="plain" aria-label="닫기"><svg class="ic10"><use href="#closeBold"/></svg></button></div>
            <svg class="ic10"><use href="#more"/></svg>
          </div>
          <div class="canvas">
            <svg class="model" viewBox="234 863 724 388" preserveAspectRatio="xMinYMin meet">
              <!-- terrain -->
              <g stroke="#111" stroke-width="1">
                <path d="M272 991l17 12 41 44 60 60 330 130 154-65v-60l-71 40-25 20-60 28-388-153-58 20z" fill="#5d483f"/>
                <path d="M272 991v73l60 46v-60z" fill="#5d483f"/>
                <path d="M272 991l20-12 58-24 30-14 38-18 82-30 40-14 18-7 24 3 60 53 41 34 44 35 66 46 24 17 33 18 16 12 8 22-71 41-25 19-60 28H390l-60-155z" fill="#1c2310"/>
                <path d="M718 1204l60-32 25-19 71-41v60l-156 63z" fill="#5d483f"/>
              </g>
              <g fill="none" stroke="#050803">
                <path d="M276 996c60-6 100-14 140-22 20-4 40-6 55-12M300 1018c50 2 90-6 120-14l30-8M331 1046c20-2 40-4 60-4M345 957c30-6 50-10 75-14M495 948c20-14 50-16 62-24 20-8 50 0 85-4M583 888c10-6 20 0 28 6M640 984c30 8 70 24 110 40 30 14 38 34 56 40 8 4 20 30 30 40l4 22M643 958c14 4 30 6 40 4"/>
              </g>
              <!-- bridge and road -->
              <g stroke="#222">
                <path d="M447 922l54-22 14 9 29-10 18-24 20-2-19 23v12l-56 17-30 18-20-2z" fill="#d2d2d2"/>
                <path d="M501 888l14 6v14l-14-8zM515 903l29-11 15-23v6l-15 24-29 9zM581 871l-18 25v8l19-27zM468 933l40-15v5l-40 15z" fill="#bcbcbc"/>
                <path d="M506 920l50 24M512 916l48 24" stroke-width="5"/><path d="M509 918l50 24" stroke="#999" stroke-width="4"/>
              </g>
              <!-- trees -->
              <g fill="#808080" stroke="#111">
                <path d="M455 923c8 1 18 3 16 8l-5 8 4 13-1 7-12 4-8 4v-40z"/>
                <path d="M432 907l-8 5-5 8-5 7 1 7-4 7v6l-5 3 3 5-2 6 5 4-4 6 8 1 9-1 7 5 10-2 12-1 3-8 5-7-2-8-8-7-3-5 2-10-7-8-2-6z"/>
                <path d="M415 989c6-8 34-8 37-4 0 8-10 10-20 9-8 0-14-2-17-5zM446 977c2-5 16-7 20-4-2 6-14 6-20 4z" stroke-width=".5"/>
                <path d="M432 907v78M455 924v50" fill="none"/>
                <path d="M787 1070l12-8 11-1 10-3 12 1 9-3 1 6 6 2-2 8 3 8-7 8-12 5-10 8-14-7-10-5-3-8-4-4z"/>
                <path d="M810 1063c-6 8 4 14 2 22l12 12M827 1060c-4 8 4 14 0 22l-3 14" fill="none"/>
                <path d="M794 1108c4-6 10-4 15 5-8 2-14-1-15-5zM817 1104c2-6 8-6 15 6-8 1-14-2-15-6z" stroke-width=".5"/>
                <path d="M806 1055v54M828 1050v50" fill="none"/>
              </g>
              <!-- house, main volume -->
              <g stroke="#111">
                <path d="M420 1010l43-17 10 16-38 13z" fill="#c9c9b0"/>
                <path d="M435 1022l38-13 30 26-42 14-14-10z" fill="#8b8b8b"/>
                <path d="M443 1028l38-15" stroke-width="1"/>
                <path d="M464 983l16-10 13 30v22l-29-22z" fill="#dbe6ee"/>
                <path d="M464 996l29 20v8l-29-20z" fill="#222"/>
                <path d="M474 1005l29 20v12l-29-22z" fill="#e6f0f4"/>
                <path d="M503 1023l69-30v19l-69 25z" fill="#d8eaf0"/>
                <path d="M510 1022v12M519 1018v14M528 1014v14M537 1010v16M546 1008v15M555 1004v15M563 1000v15M483 1012v12M492 1018v12" fill="none" stroke-width="2"/>
                <path d="M493 1003l116-46v18l-37 14-69 34-10-8z" fill="#8e8e8e"/>
                <path d="M512 998l8-3v17l-8 3zM527 992l8-3v14l-8 3zM548 984l9-3v15l-9 3zM583 968l8-3v19l-8 3zM597 962l8-3v18l-8 3z" fill="#e3eef2"/>
                <path d="M503 1037l70-26v3l-70 26z" fill="#d8d8c4"/>
                <path d="M534 1014l30-12v10l-30 10z" fill="#344"/>
                <path d="M479 974l114-49 16 32-116 46z" fill="url(#seam)" stroke="#2347a8"/>
                <path d="M561 958l6-2 3 8-6 2z" fill="#dfe8ff"/>
              </g>
              <!-- right wing -->
              <g stroke="#111">
                <path d="M609 959h55l-42 18z" fill="#d0d0bb"/>
                <path d="M616 975l49-16v7l-34 18z" fill="#cfcfcf"/>
                <path d="M609 962l14 16-6 4-14-14z" fill="#111"/>
                <path d="M574 983l36-12 47 34-34 16-46-30z" fill="#222"/>
                <path d="M584 987l26-13 38 30-25 12z" fill="#a7a7a7"/>
                <path d="M622 1018l31-14 7 5-29 13z" fill="#9c9c9c"/>
                <path d="M572 991l13 12 55 34v14h-30l-38-34z" fill="#9c4526"/>
                <path d="M586 1004l27 17v18l-27-18z" fill="#223"/>
                <path d="M588 1008l5 3v11l-5-3zM597 1014l5 3v11l-5-3zM606 1019l5 3v12l-5-3z" fill="#a7c4cc"/>
                <path d="M628 1027l35-16 16 13v26h-39v-14z" fill="#9c4526"/>
                <path d="M634 1031l29-13v18l-23 10v-10z" fill="#c6dce2"/>
                <path d="M642 1029v12M650 1026v12M657 1022v12" stroke-width="2"/>
                <path d="M641 1042l32-5 6 13h-38z" fill="#eee"/>
                <path d="M643 1052l35-15M655 1052l23-9" stroke-width="3"/>
                <path d="M596 994l24-9M600 997l24-9M604 1000l26-10" fill="none"/>
                <path d="M640 992v28" stroke-width="2"/>
              </g>
              <!-- benches -->
              <path d="M381 1032h12v4h-12zM396 1033h12v4h-12zM411 1034h12v4h-12zM426 1035h12v4h-12zM381 1039h12v4h-12zM396 1040h12v4h-12zM411 1041h12v4h-12zM426 1042h12v4h-12z" fill="#eee" stroke="#111"/>
              <!-- turbines -->
              <path d="M596.500 900v34M618.500 900v58M641 899v59M588 912l8-5 9 5M610 912l8-5 9 5M632 912l9-5 9 5" fill="none" stroke="#111" stroke-width="2"/>
              <!-- temporary dimensions -->
              <g fill="none" stroke="#5b86e6">
                <path d="M468 950l115-47M468 948l12 26M583 902l10 24M600 945l26 2"/>
                <path d="M580 978l50 34M555 1000l-24 14M610 1000l40 20" stroke="#27a0d8" stroke-dasharray="4 3"/>
                <path d="M484 988l12-6 8 8M480 994l10 2M476 999l6-12 4 10" stroke="#2450c8"/>
              </g>
              <circle cx="468" cy="951" r="2" fill="#5b86e6"/><circle cx="583" cy="903" r="2" fill="#5b86e6"/>
              <text x="512" y="925" transform="rotate(-20 512 925)" font-family="Open Sans" font-style="italic" font-size="11" fill="#2450c8">8600.0</text>
              <use href="#lock" x="621" y="940" width="12" height="14"/>
              <use href="#lock" x="601" y="983" width="12" height="14"/>
              <use href="#lock" x="658" y="1006" width="12" height="14"/>
              <use href="#lock" x="571" y="1015" width="12" height="14"/>
              <use href="#lock" x="548" y="981" width="12" height="14"/>
              <use href="#lock" x="544" y="991" width="12" height="14"/>
              <!-- view cube -->
              <g stroke="#bbb">
                <ellipse cx="908" cy="928" rx="35" ry="21" fill="none" stroke-dasharray="6 1"/>
                <ellipse cx="908" cy="927" rx="27" ry="15" fill="#f2f2f2"/>
                <path d="M889 902l20-9 18 9-21 9z" fill="#f4f4f4" stroke="#888"/>
                <path d="M889 902l17 9v24l-17-13z" fill="#e2e2e2" stroke="#888"/>
                <path d="M927 902l-21 9v24l21-13z" fill="#ececec" stroke="#888"/>
                <path d="M901 903l12-4M892 916l10 5M910 922l12-6" stroke="#aaa" stroke-width="3" stroke-dasharray="2 1"/>
                <path d="M904 946h8v4h-8zM875 924l6 4M936 928l6-4" fill="#ccc" stroke="#aaa" stroke-width="2"/>
              </g>
            </svg>
            <div class="vbar"><svg class="up"><use href="#chev"/></svg><i class="thumb-v"></i><svg><use href="#chev"/></svg></div>
          </div>
          <div class="hbar"><span>1 :</span><i class="thumb-h"></i><svg class="right"><use href="#chev"/></svg><i class="grip"></i></div>
        </main>
      </div>

      <div class="status">
        <span class="hint">선택하려면 항목을 클릭</span>
        <svg class="ic16"><use href="#worksets"/></svg>
        <span class="combo ws"><select aria-label="작업세트"><option></option></select><svg><use href="#chev"/></svg></span>
        <svg class="ic14"><use href="#brush"/></svg><span class="zero">:0</span>
        <svg class="ic14 opt"><use href="#home"/></svg><svg class="ic14"><use href="#closeViews"/></svg>
        <span class="combo opts"><select aria-label="설계 옵션"><option>주 모델</option></select><svg><use href="#chev"/></svg></span>
        <div class="sel">
          <svg><use href="#selLink"/></svg><svg><use href="#selUnder"/></svg><svg><use href="#selPin"/></svg><svg><use href="#selFace"/></svg><svg><use href="#selDrag"/></svg><svg><use href="#gear"/></svg><svg><use href="#filter"/></svg><span>:1</span>
        </div>
      </div>
    </div>

    <div class="callout mark"></div>
    <svg class="leader leader-b" viewBox="0 0 60 234"><path d="M1 66L59 1M0 183L59 232"/></svg>
    <div class="callout zoomed">
      <table class="params">
        <tr class="cut"><th></th><td></td><td></td></tr>
        <tr class="group"><th colspan="2">기타</th><td><svg><use href="#dbl"/></svg></td></tr>
        <tr><th>설치 시작</th><td>20.12.23</td><td class="k"><button aria-label="연관"></button></td></tr>
        <tr><th>Object Name</th><td>SG Metal Panels...</td><td class="k"><button aria-label="연관"></button></td></tr>
        <tr><th>Object ID</th><td>243274</td><td class="k"><button aria-label="연관"></button></td></tr>
        <tr><th>설치 종료</th><td>21.01.12</td><td class="k"><button aria-label="연관"></button></td></tr>
        <tr><th>신공법적용</th><td><input type="checkbox" aria-label="신공법적용" checked></td><td class="k"><button aria-label="연관"></button></td></tr>
      </table>
    </div>
    <figcaption>(b)</figcaption>
  </figure>
</body>
</html>
```
FILE: styles.css
```css
:root {
  --face: #ededed;
  --chrome: #cacaca;
  --green: #e4efd6;
  --red: #ff0000;
  --line: #555;
  --text: #333;
}
* {
  box-sizing: border-box;
}
body {
  margin: 0;
  background: #fff;
  color: var(--text);
  font-family: Roboto, "Noto Sans CJK KR", sans-serif;
  font-size: 11px;
  line-height: 16px;
}
p, ul, figure {
  margin: 0;
  padding: 0;
}
ul {
  list-style: none;
}
button, input, select {
  font: inherit;
  color: inherit;
  margin: 0;
}
button {
  padding: 0;
  border: 0;
  background: none;
}
svg {
  display: block;
  flex: none;
}
a {
  color: inherit;
  text-decoration: none;
}
.sprite {
  position: absolute;
  width: 0;
  height: 0;
}
.ic10 { width: 10px; height: 10px; }
.ic12 { width: 12px; height: 12px; }
.ic14 { width: 14px; height: 14px; }
.ic16 { width: 16px; height: 16px; }
.plain {
  display: flex;
  align-items: center;
}

/* FIGURES */
.fig {
  position: relative;
}
figcaption {
  padding: 30px 0 24px;
  font-family: "Open Sans", sans-serif;
  font-size: 28px;
  font-weight: 300;
  line-height: 40px;
  text-align: center;
  color: #000;
}
.callout {
  border: 2px solid var(--red);
}
.leader {
  position: absolute;
  fill: none;
  stroke: var(--red);
  stroke-width: 1.3px;
}
.leader-a {
  left: 272px;
  top: 180px;
  width: 136px;
  height: 250px;
}

/* SHARED FORM PARTS */
.box {
  border: 1px solid var(--line);
}
.btn {
  border: 1px solid #999;
  background: #ddd;
}
.radio {
  display: flex;
  align-items: center;
}
.radio input {
  appearance: none;
  border: 1px solid #777;
  border-radius: 50%;
  background: #fff;
}
.radio input:checked {
  background: radial-gradient(circle, #222 0 40%, #fff 46%);
}
.combo {
  position: relative;
  display: block;
}
.combo select {
  appearance: none;
  display: block;
  width: 100%;
  height: 100%;
  border: 1px solid #b5b5b8;
  border-radius: 0;
  background: linear-gradient(#f0f0f0, #e3e3e3);
}
.combo > svg {
  position: absolute;
  right: 4px;
  top: 50%;
  width: 9px;
  height: 9px;
  margin-top: -4px;
  color: #666;
}

/* DIALOG */
.fig-row {
  display: flex;
  align-items: flex-start;
  gap: 37px;
  padding: 14px 17px 0 16px;
}
.dialog {
  flex: none;
  width: 285px;
  border: 1px solid #777;
  background: var(--face);
}
.dialog-title {
  display: flex;
  align-items: center;
  gap: 4px;
  height: 26px;
  padding: 0 6px 0 8px;
  background: #fff;
}
.dialog-title .plain {
  margin-left: auto;
}
.dialog-body {
  display: flex;
  flex-direction: column;
  padding: 7px 9px 11px 8px;
}
.box-head {
  display: flex;
  align-items: flex-start;
  justify-content: space-between;
  height: 90px;
  padding: 12px 23px 0 10px;
}
.inu {
  width: 65px;
  height: 65px;
  border: 2px solid #111;
  background: #fff;
}
.btn-convert {
  width: 128px;
  height: 28px;
  margin-top: 3px;
  font-size: 13px;
}
.dialog .section-label {
  padding: 15px 0 10px 12px;
}
.dialog .box-new {
  height: 102px;
  padding: 9px 18px 0 9px;
}
.dialog .radio {
  gap: 4px;
}
.dialog .radio input {
  width: 11px;
  height: 11px;
}
.dialog .fields {
  display: grid;
  grid-template-columns: 96px 99px;
  grid-template-rows: 16px 19px;
  gap: 7px 8px;
  width: 222px;
  margin: 7px 0 0 16px;
  padding: 8px 7px;
  height: 62px;
}
.fields {
  text-align: center;
}
.fields input {
  width: 100%;
  border: 1px solid #b5b5b8;
  background: #fff;
}
.dialog .fields input {
  padding: 0 2px 3px;
}
.dialog .box-list {
  height: 173px;
  margin-top: 14px;
  padding: 15px 10px 11px 9px;
}
.list {
  border: 1px solid #b5b5b8;
  background: #fff;
}
.dialog .list {
  height: 125px;
  margin-top: 4px;
  padding: 2px 5px;
}
.btn-add {
  height: 43px;
  margin-top: 11px;
  background: #b0e0e6;
}
.btn-remove {
  height: 41px;
  margin-top: 18px;
}

/* CLOSE-UP OF THE DIALOG */
.closeup {
  position: relative;
  flex: 1;
  height: 488px;
  margin-top: 14px;
  padding: 14px 22px 0 21px;
  overflow: hidden;
  background: var(--face);
  color: #222;
  font-size: 24px;
  line-height: 32px;
}
.closeup::before,
.closeup::after {
  content: "";
  position: absolute;
  left: 0;
  top: 69px;
  bottom: 0;
  width: 1px;
  background: #777;
}
.closeup::after {
  left: auto;
  right: 0;
  top: 264px;
  background: #222;
}
.closeup .section-label {
  padding: 0 0 22px 26px;
}
.closeup .box {
  border: 2px solid #222;
}
.closeup .box-new {
  height: 228px;
  padding: 23px 0 0 20px;
}
.closeup .radio {
  gap: 10px;
}
.closeup .radio input {
  width: 23px;
  height: 23px;
  border: 2px solid #888;
}
.closeup .fields {
  display: grid;
  grid-template-columns: 213px 220px;
  grid-template-rows: 32px 43px;
  gap: 18px;
  width: 451px;
  margin: 41px 0 0 58px;
}
.closeup .fields input {
  height: 42px;
  padding: 0 4px 6px;
  border-width: 2px;
}
.closeup .combo select {
  border-width: 2px;
}
.closeup .combo > svg {
  right: 10px;
  width: 15px;
  height: 15px;
  margin-top: -9px;
}
.menu {
  position: absolute;
  z-index: 2;
  top: 43px;
  left: 0;
  width: 100%;
  border: 1px solid #555;
  background: #fff;
  box-shadow: 5px 5px 4px #0008;
  font-size: 22px;
  text-align: left;
}
.menu li {
  height: 37px;
  padding: 0 8px;
  border: 2px solid #fff;
  line-height: 35px;
}
.menu .active {
  border-color: #26a0da;
  background: #b8dff1;
}
.closeup .box-list {
  height: 200px;
  margin-top: 31px;
  padding: 35px 23px 0 20px;
}
.closeup .list {
  height: 140px;
  margin-top: 12px;
  padding: 2px 10px;
  border-width: 2px;
}
.closeup .list li {
  line-height: 37px;
}
.frame {
  position: absolute;
  z-index: 1;
  left: 68px;
  top: 150px;
  width: 509px;
  height: 251px;
}

/* APP WINDOW */
.fig-b {
  margin: 0 18px 0 23px;
}
.app {
  padding: 0 2px;
  border: 1px solid #c4c4c4;
  background: var(--chrome);
}
.titlebar {
  display: flex;
  align-items: center;
  height: 30px;
  padding-left: 1px;
}
.logo {
  width: 20px;
  height: 20px;
}
.q {
  display: flex;
  flex: none;
  align-items: center;
  justify-content: center;
  width: 22px;
  height: 22px;
}
.q svg {
  width: 16px;
  height: 16px;
}
.q .ic12 {
  width: 12px;
  height: 12px;
}
.q-open {
  margin-left: 4px;
}
.q-text {
  font-size: 17px;
  font-weight: 900;
}
.help b {
  width: 15px;
  height: 15px;
  border: 1px solid #3a4a66;
  border-radius: 50%;
  background: #f4f8fd;
  color: #1c63c4;
  line-height: 13px;
}
.caret {
  flex: none;
  width: 9px;
  height: 3px;
  background: #333;
  clip-path: polygon(2px 0, 7px 0, 4px 3px);
}
.caret.dim {
  background: #999;
}
.sep {
  flex: none;
  width: 6px;
  height: 18px;
  background: linear-gradient(90deg, transparent 2px, #bbb 2px 3px, transparent 3px);
}
.doc-name {
  width: 114px;
  margin-left: 5px;
  white-space: nowrap;
}
.caret-left {
  width: 8px;
  height: 6px;
  background: #333;
  clip-path: polygon(5px 0, 5px 6px, 1px 3px);
}
.user-name {
  width: 72px;
}
.q-cart {
  margin-left: 4px;
}
.help {
  margin-left: 5px;
}
.win {
  display: flex;
  margin-left: auto;
}
.w-min {
  width: 8px;
  height: 2px;
  margin-top: 10px;
  background: #222;
}
.w-max {
  width: 11px;
  height: 10px;
  border: 1px solid #222;
  border-top-width: 2px;
}
.tabs {
  display: flex;
  align-items: center;
  height: 17px;
  line-height: 17px;
}
.tab-list {
  display: flex;
  justify-content: space-between;
  width: 632px;
}
.tabs a {
  padding: 0 9px;
  color: #444;
  white-space: nowrap;
}
.tabs .file {
  width: 40px;
  padding: 0;
  margin-right: 2px;
  background: #1f76ac;
  color: #fff;
  text-align: center;
}
.tabs .current {
  width: 68px;
  padding: 0;
  background: var(--green);
  text-align: center;
}
.cycle {
  display: flex;
  align-items: center;
  justify-content: center;
  width: 14px;
  height: 8px;
  margin-left: 20px;
  border: 1px solid #555;
  border-radius: 2px;
  background: #eee;
}
.cycle i {
  width: 6px;
  height: 3px;
  background: #333;
  clip-path: polygon(0 3px, 6px 3px, 3px 0);
}

/* RIBBON */
.ribbon {
  display: flex;
  height: 85px;
  border-bottom: 1px solid #ccc;
  background: var(--green);
}
.panel {
  display: flex;
  flex: none;
  flex-direction: column;
  align-items: center;
  border-right: 1px solid #dfe9cf;
  background: #efefef;
}
.tools {
  display: flex;
  justify-content: center;
  align-content: start;
  height: 67px;
  padding-top: 2px;
}
.name {
  display: flex;
  align-items: center;
  justify-content: center;
  gap: 4px;
  width: 100%;
  height: 16px;
  color: #444;
}
.ctx {
  border-right: 2px solid var(--green);
}
.ctx .name {
  background: var(--green);
}
.tri {
  width: 7px;
  height: 4px;
  background: #222;
  clip-path: polygon(0 0, 7px 0, 3px 4px);
}
.s, .b {
  display: flex;
  align-items: center;
  justify-content: center;
  height: 22px;
}
.s svg {
  width: 16px;
  height: 16px;
}
.b {
  height: 32px;
}
.b svg {
  width: 27px;
  height: 27px;
}
.big {
  display: flex;
  flex-direction: column;
  align-items: center;
  padding-top: 4px;
  line-height: 14px;
  white-space: nowrap;
}
.big svg {
  width: 27px;
  height: 27px;
  margin-bottom: 3px;
}
.big .ptr {
  width: 16px;
  height: 24px;
  margin-bottom: 5px;
}
.big .caret {
  margin-top: 4px;
}
.on {
  border: 1px solid #5a9bd8;
  background: #b7d7f1;
}
.off {
  color: #aaa;
}
.tools .caret {
  align-self: center;
}
.big .caret {
  align-self: auto;
}
.p-select { width: 44px; }
.p-select .big { width: 34px; height: 64px; }
.p-props { width: 39px; }
.grid-props { flex-direction: column; }
.grid-props .b { width: 34px; }
.grid-props .on svg { height: 26px; }
.p-clip { width: 90px; }
.p-clip .big { width: 62px; }
.stack { width: 22px; }
.stack .s { width: 22px; }
.p-geo { width: 94px; }
.grid-geo { display: grid; grid-template-columns: 22px 12px 22px 22px 10px; }
.p-ctrl { width: 41px; }
.p-modify { width: 212px; }
.grid-big { display: grid; grid-template-columns: repeat(4, 35px); align-content: start; }
.grid-small { display: grid; grid-template-columns: repeat(3, 23px); align-content: start; }
.p-view { width: 57px; }
.grid-view { display: grid; grid-template-columns: 22px 9px 22px; }
.p-measure { width: 50px; }
.grid-measure { display: grid; grid-template-columns: 36px 10px; }
.p-create { width: 74px; }
.grid-create { display: grid; grid-template-columns: repeat(2, 35px); }
.p-mode { width: 55px; }
.p-open { width: 42px; }
.p-plane { width: 53px; border: 1px solid #ccc; background: var(--green); }
.p-place { width: 31px; }
.place { flex-direction: column; justify-content: center; }
.place .s { width: 22px; height: 20px; }
.place .off { border: 1px solid #ddd; }
.options {
  height: 23px;
  padding-left: 9px;
  background: var(--green);
  line-height: 24px;
}

/* PROPERTIES */
.work {
  display: flex;
  gap: 3px;
  margin-top: 3px;
}
.props {
  display: flex;
  flex: none;
  flex-direction: column;
  width: 205px;
  background: #f0f0f0;
}
.props header {
  display: flex;
  align-items: center;
  justify-content: space-between;
  height: 18px;
  padding: 0 3px;
}
.type {
  display: flex;
  align-items: center;
  height: 67px;
  padding: 0 2px 0 4px;
  border: solid #333;
  border-width: 2px 0;
  line-height: 15px;
}
.type .thumb {
  display: flex;
  align-items: center;
  width: 58px;
  height: 58px;
  margin-right: 4px;
  border: 1px solid #ddd;
  background: #fff;
}
.thumb i {
  width: 100%;
  height: 13px;
  background: linear-gradient(#c01818 0 3px, #f8eea4 3px 9px, #333 9px);
}
.type .tri {
  margin-left: auto;
}
.instance {
  display: flex;
  height: 20px;
  padding-left: 1px;
}
.instance .combo {
  width: 126px;
  height: 20px;
}
.instance select {
  padding: 0 3px;
  background: #ddd;
}
.instance .plain {
  gap: 4px;
  margin-left: 5px;
  padding-bottom: 3px;
}
.grid-wrap {
  display: flex;
  height: 295px;
  background: #fff;
}
.params {
  flex: none;
  table-layout: fixed;
  width: 189px;
  height: 272px;
  margin-left: 1px;
  border-spacing: 0;
  background: #fff;
}
.params th, .params td {
  height: 16px;
  padding: 0;
  border-right: 1px dotted #888;
  border-bottom: 1px dotted #888;
  font-weight: normal;
  line-height: 15px;
  text-align: left;
  white-space: nowrap;
}
.params th {
  width: 88px;
  padding-left: 9px;
}
.params td {
  width: 89px;
  padding-left: 3px;
}
.params td:last-child {
  width: 12px;
  padding: 0;
}
.params .group th, .params .group td {
  border-right: 0;
  background: #dcdcdc;
}
.params .group th {
  padding-left: 2px;
}
.params .group svg {
  width: 7px;
  height: 9px;
}
.params .k button {
  display: block;
  width: 10px;
  height: 14px;
  border: 1px solid #bbb;
  border-right-color: #999;
  border-bottom-color: #999;
  background: #e2e2e2;
}
.params input {
  appearance: none;
  position: relative;
  display: block;
  width: 12px;
  height: 12px;
  border: 1px solid #333;
}
.params input:checked::after {
  content: "";
  position: absolute;
  left: 30%;
  top: 5%;
  width: 30%;
  height: 60%;
  border: solid #333;
  border-width: 0 1px 1px 0;
  transform: rotate(40deg);
}
.vbar {
  display: flex;
  flex: none;
  flex-direction: column;
  align-items: center;
  width: 14px;
  padding: 4px 0;
  background: #f0f0f0;
  color: #444;
}
.vbar svg, .hbar svg {
  width: 10px;
  height: 10px;
}
.vbar .up {
  transform: rotate(180deg);
}
.thumb-v {
  width: 13px;
  background: #cdcdcd;
}
.props .vbar .thumb-v {
  height: 130px;
  margin: 134px 0 4px;
}
.props footer {
  display: flex;
  justify-content: space-between;
  height: 22px;
  padding: 2px 2px 2px 3px;
}
.props footer a {
  color: #2a78d0;
  text-decoration: underline;
}
.props footer button {
  width: 77px;
  border: 1px solid #c0c0c0;
  background: #cacaca;
  color: #8c8c8c;
}

/* 3D VIEW */
.view {
  display: flex;
  flex: 1;
  flex-direction: column;
  min-width: 0;
}
.doc-tabs {
  display: flex;
  align-items: center;
  justify-content: space-between;
  height: 17px;
  padding-right: 3px;
}
.doc-tab {
  display: flex;
  align-items: center;
  gap: 7px;
  width: 113px;
  height: 17px;
  padding: 0 3px 0 5px;
  background: #fff;
}
.doc-tab .plain {
  margin-left: auto;
}
.canvas {
  display: flex;
  height: 388px;
  background: #fff;
}
.model {
  flex: 1;
  min-width: 0;
  height: 388px;
}
.canvas .thumb-v {
  height: 16px;
  margin: 173px 0 auto;
}
.hbar {
  display: flex;
  align-items: center;
  height: 17px;
  padding: 0 5px 0 29px;
  border-bottom: 1px solid #ddd;
  background: #efefef;
}
.thumb-h {
  width: 15px;
  height: 13px;
  margin-left: auto;
}
.hbar .thumb-h {
  margin-right: 147px;
  background: #cdcdcd;
}
.hbar .right {
  transform: rotate(-90deg);
}
.grip {
  width: 9px;
  height: 9px;
  margin-left: 9px;
  background: radial-gradient(circle, #aaa 1px, transparent 1px) 0 0 / 3px 3px;
  clip-path: polygon(100% 0, 100% 100%, 0 100%);
}
.status {
  display: flex;
  align-items: center;
  height: 23px;
  padding-left: 1px;
}
.hint {
  width: 110px;
  margin-right: 4px;
  white-space: nowrap;
}
.status .combo {
  height: 16px;
}
.status select {
  border: 0;
  background: #fff;
  color: #777;
}
.ws {
  width: 182px;
  margin: 0 3px 0 7px;
}
.zero {
  margin: 0 12px 0 7px;
}
.opt {
  margin-right: 8px;
}
.opts {
  width: 187px;
  margin-left: 5px;
}
.sel {
  display: flex;
  align-items: center;
  gap: 7px;
  margin-left: auto;
  padding-right: 30px;
}
.sel svg {
  width: 16px;
  height: 16px;
}
.sel span {
  margin-left: -7px;
}

/* CLOSE-UP OF THE PARAMETERS */
.mark {
  position: absolute;
  left: -3px;
  top: 424px;
  width: 201px;
  height: 119px;
  border-left: 0;
}
.leader-b {
  left: 197px;
  top: 360px;
  width: 60px;
  height: 234px;
}
.zoomed {
  position: absolute;
  left: 255px;
  top: 361px;
  width: 440px;
  height: 232px;
  padding: 0 7px;
  background: #e2e2e2;
  color: #222;
  font-size: 25px;
}
.zoomed .params {
  width: 422px;
  height: auto;
  margin: 0;
  border-bottom: 5px solid #fff;
}
.zoomed th, .zoomed td {
  height: 36px;
  border-width: 0 2px 2px 0;
  line-height: 30px;
  vertical-align: top;
}
.zoomed .cut th, .zoomed .cut td {
  height: 7px;
}
.zoomed th {
  width: 199px;
  padding-left: 20px;
}
.zoomed td {
  width: 198px;
  padding-left: 4px;
}
.zoomed td:last-child {
  width: 25px;
}
.zoomed .group th {
  padding-left: 5px;
  line-height: 34px;
}
.zoomed .group td {
  vertical-align: middle;
}
.zoomed .group svg {
  width: 13px;
  height: 18px;
}
.zoomed .k button {
  width: 19px;
  height: 31px;
  margin: 2px 0 0 3px;
  border: 2px solid #c4c4c4;
  border-right: 4px solid #aaa;
  border-bottom: 4px solid #aaa;
}
.zoomed input {
  width: 26px;
  height: 26px;
  margin: 5px 0 0 2px;
  border-width: 2px;
}
.zoomed input:checked::after {
  border-width: 0 3px 3px 0;
}
.fig-b figcaption {
  padding: 22px 0 9px;
}
```
